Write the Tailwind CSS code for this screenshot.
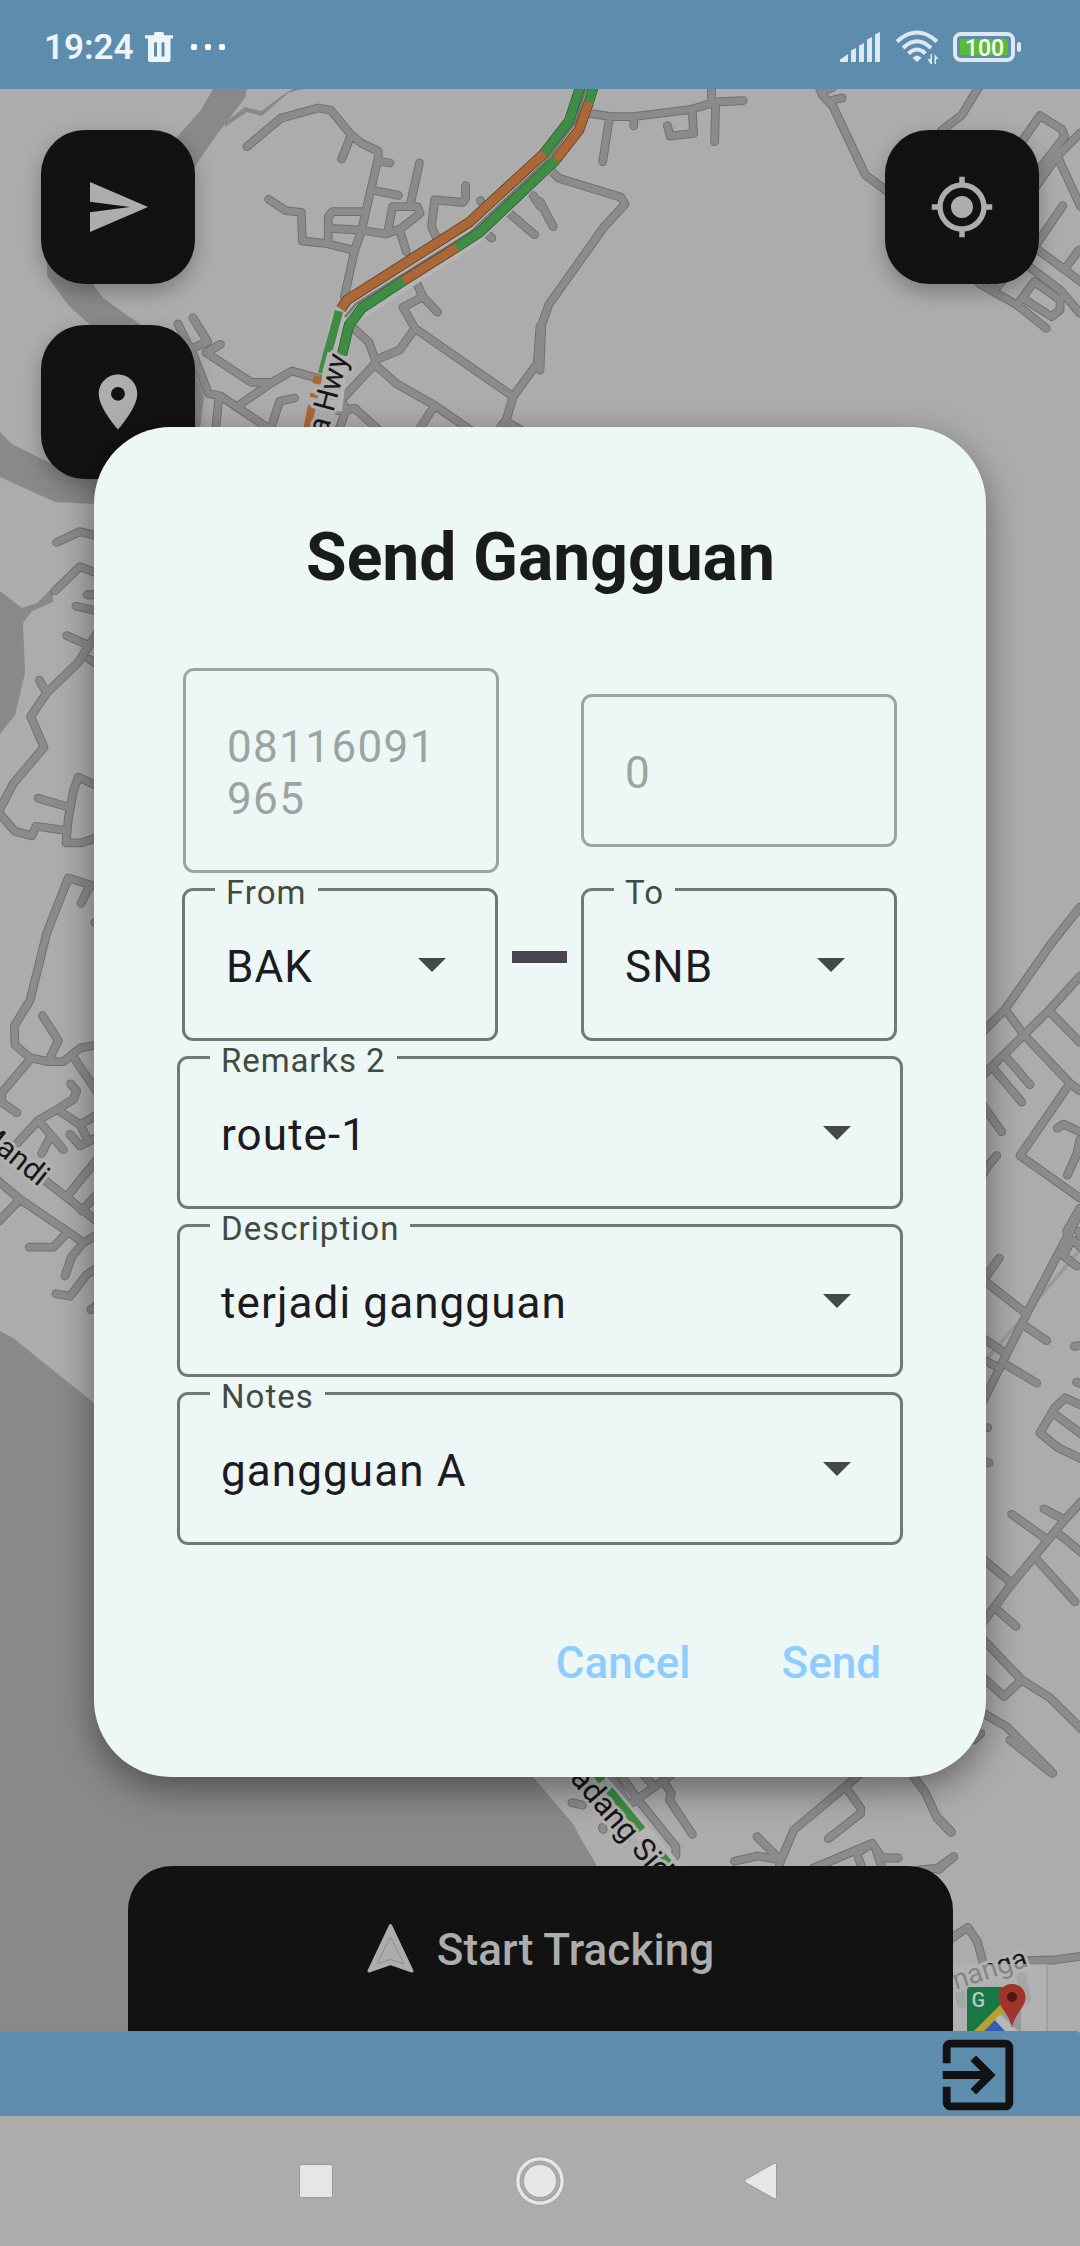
<!DOCTYPE html>
<html lang="id">
<head>
<meta charset="utf-8">
<title>Send Gangguan</title>
<script src="https://cdn.jsdelivr.net/npm/@tailwindcss/browser@4"></script>
</head>
<body class="bg-[#acacac]">
<div class="relative flex h-[2246px] w-[1080px] flex-col overflow-hidden font-[Roboto,sans-serif]">

  <!-- Status bar -->
  <header class="flex h-[89px] shrink-0 items-center justify-between bg-[#5e8cac] pl-[44px] pr-[58px] pt-[5px] text-[#edf5fa]">
    <div class="flex items-center">
      <span class="mt-[2px] w-[101px] text-[35px] font-semibold leading-[40px]">19:24</span>
      <svg class="h-[30px] w-[28px]" viewBox="0 0 28 30"><path fill="#edf5fa" d="M0 3.3H9V1.5Q9 0 10.5 0H17.5Q19 0 19 1.5V3.3H28V6.6H0Z"/><path fill="#edf5fa" fill-rule="evenodd" d="M3 6H25.5V28Q25.5 30 23.5 30H5Q3 30 3 28ZM9 11.5Q9 10 10.5 10T12 11.5V24.5H9ZM16.5 11.5Q16.5 10 18 10T19.5 11.5V24.5H16.5Z"/></svg>
      <span class="ml-[18px] flex gap-[8px]"><i class="size-[6px] rounded-[2px] bg-white"></i><i class="size-[6px] rounded-[2px] bg-white"></i><i class="size-[6px] rounded-[2px] bg-white"></i></span>
    </div>
    <div class="flex items-center">
      <svg class="h-[30px] w-[41px]" viewBox="0 0 41 30"><path fill="#dde8f1" d="M0 30V27.5L8 22V30ZM11 18.5L16 16V30H11ZM19 13.5L24 11V30H19ZM27 7.5L32 5V30H27ZM35 2.5L40 0V30H35Z"/></svg>
      <svg class="ml-[15px] h-[34px] w-[43px]" viewBox="0 0 43 34"><g fill="none" stroke="#dde8f1" stroke-width="4"><path d="M1 11.5Q21 -6.500 41 11.500"/><path d="M7 18Q21 4.500 35 18"/><path d="M12.500 23.500Q21 15.500 29.500 23.500"/></g><path fill="#dde8f1" d="M16.500 28Q21 23 25.500 28L21 32ZM34.500 24H36V34H34.500L31.500 29H34.500ZM38.500 24L42.500 29H40V34H38.500Z"/></svg>
      <svg class="ml-[14px] h-[30px] w-[69px]" viewBox="0 0 69 30"><rect x="2" y="2" width="58" height="26" rx="6" fill="none" stroke="#dde8f1" stroke-width="4"/><rect x="7" y="7" width="48" height="16" rx="2" fill="#5abd32"/><rect x="64" y="10" width="4" height="10" rx="2" fill="#dde8f1"/><text x="31.500" y="23.500" text-anchor="middle" font-size="23" font-weight="500" fill="#fff">100</text></svg>
    </div>
  </header>

  <!-- Map -->
  <main class="relative h-[1942px] shrink-0 overflow-hidden bg-[#acacac]">
    <svg class="absolute inset-0 h-[1942px] w-[1080px] [&_path]:[vector-effect:non-scaling-stroke]" viewBox="0 89 1080 1942">
      <g fill="#898989">
        <path d="M213 89L201 110 177 137 120 180 75 220 47 250V276L69 306 90 325 130 355 165 390 160 430 110 470 50 463 12 444 0 432V477L55 502 94 504 150 500 200 428 204 397 195 372 141 325 103 298 92 283 150 230 195 166 218 133 245 98 247 89Z"/>
        <path d="M225 122L245 107 261 111 286 93 293 89H302L288 93 262 116 247 112 225 127Z"/>
        <path d="M0 591L22 608 37 603 53 587V602L32 611 23 623 25 673 15 715 0 734Z"/>
        <path d="M0 1331L13 1338 94 1403 300 1500 533 1777 574 1825 580 1837 597 1866 620 2031H0Z"/>
      </g>
      <defs>
        <g id="roads">
          <g transform="scale(.34439 .33333)">
            <path d="M717 440L815 355 923 324 960 330 1020 405 992 477M1020 405L1050 430 1098 454V475L1072 590 1050 690 1030 750 1000 890M1098 483L1132 489M1080 570L1157 586M780 598L830 632 875 637 878 723 945 730 1025 750M1050 635H965L953 650V725M955 685L1045 690 1120 702 1165 685 1220 640 1212 620H1140L1125 700M1218 489L1192 610M1160 690L1180 755M1352 557V595L1345 607 1262 600 1253 680 1268 715M1395 602L1397 605M1415 702L1428 714M1480 640L1552 704M1548 587L1568 618M1208 845L1228 890 1270 936M1228 890L1170 922 1205 985 1160 1050 1090 1080 1070 1025 1030 988M1205 985L1490 1190 1470 1260 1440 1300M1490 1190L1560 1090 1568 980M1470 1265L1530 1300M1090 1090L1000 1190 990 1205 1010 1230M1090 1095L1150 1150 1260 1215 1380 1300M1260 1220L1210 1300M980 1232L1030 1225 1110 1300M1005 1230L980 1300M517 972L552 1048 603 1025 560 953M552 1040L605 1180 640 1188 780 1285M636 1190L625 1300M640 1033L598 1058 730 1147H790L848 1113 930 1137M790 1147L695 1215M855 1194L812 1204 785 1290"/>
          </g>
          <g transform="translate(540 0) scale(.34439 .33333)">
            <path d="M145 340L205 350H272L440 328 510 306 590 302M498 260V306M202 350L182 485M272 350V377M442 330L446 400 378 408 370 377M510 306L507 425M35 515L55 535 235 592 247 612 185 682 25 915 5 975 0 1110M0 605L38 680M810 260L820 285 850 318 945 525 1010 575M850 300L877 294M825 272L850 262M1275 260L1225 345 1165 392M1395 430L1452 347 1515 388 1523 410 1440 520M1570 398L1500 470 1440 560M1505 475L1570 620M1518 617L1440 735M1440 745L1525 810 1570 845M1525 805L1565 750M1420 800L1510 870 1568 940M1275 850L1385 915 1470 985M1320 870L1345 840M1385 915L1435 845 1510 900V930L1485 950 1410 900"/>
          </g>
          <g transform="translate(0 420) scale(.33333 .63776)">
            <path d="M170 192L240 175 290 182M165 268L240 230 290 240M262 274H290M228 292L290 299M200 338L265 353M290 335L235 380 140 428 92 465 132 513 40 570 -5 615 45 645 95 652 108 637 190 643M118 408L140 428M268 375L290 382M115 593L205 607M290 573L235 560 220 582 205 625 198 663H245L290 655M290 732L205 718 140 805 90 910 43 950 45 980 90 1000 145 1006H190L240 985 290 980M265 735L243 758M290 790L285 788M127 934L175 973 150 1000M215 995L290 1052M90 1003L5 1055V1070L50 1086M50 1135L115 1098 175 1080 220 1065 230 1052 212 1041M175 1082L240 1105 290 1090M240 1105L265 1130M290 1125L240 1138 210 1120M115 1098L190 1144M150 1125L125 1150M290 1160L205 1215M130 1190L290 1256M290 1215L245 1240M-5 1193L60 1222 210 1275 250 1290 290 1278M60 1222L-5 1257M200 1275L160 1297H88M250 1290L215 1312 195 1342M168 1370L210 1374 260 1340 290 1330M272 1395L290 1388"/>
          </g>
          <g transform="translate(980 420) scale(.33333 .5102)">
            <path d="M300 955L215 1025 75 1155 0 1205M75 1155L132 1205 270 1300 300 1315M300 1090L210 1155 132 1205 0 1290M210 1160L300 1220M80 1250L150 1303M45 1275L125 1337M0 1335L65 1395M0 1490L20 1465 50 1442M270 1300L120 1442 300 1525M300 1395L250 1380 232 1388M300 1410L290 1440 262 1480M300 1545L260 1590"/>
          </g>
          <g transform="translate(940 1200) scale(.33333 .44643)">
            <path d="M425 20L260 255 200 345 130 450M395 90L370 125 410 148M400 90L425 108M415 70L425 85M130 180L178 130M140 185L260 255M260 285L320 315M200 345L130 310M175 375L130 358M200 370L290 410M130 510H143M130 585L147 589M425 325L403 328M410 408L425 412M425 460L375 443 345 465 300 522 355 555 425 580M345 480L425 525M425 675L370 720 210 865 130 945M215 704L320 760M312 692L370 715M360 750L425 790M290 805L405 900M130 805L210 855M175 920L228 955M130 985L245 1075 330 1115 425 1185M245 1075L192 1112 130 1070M130 1150L200 1180 338 1284M100 1210L122 1195M-5 1385L35 1416M-5 1500L40 1472"/>
          </g>
          <g transform="translate(480 1740) scale(.38265 .33333)">
            <path d="M240 188L268 195M320 262L322 268M365 100L410 175 512 320V345L500 365M340 100L385 190M395 190L500 105M425 100L455 140M480 125L500 160 495 180 555 283M990 105L955 140 820 270 785 365 780 390M955 140L995 205V220L910 296M724 290L785 360 725 348 665 364M870 385L1025 310 1050 354H1093M1025 310L985 340 1000 390M1035 330L1052 390M1130 105L1165 160 1195 235 1230 277M1150 390L1195 385 1238 350M1385 0L1495 100M1225 600L1275 562 1300 605 1315 670M1430 662L1500 660 1575 648M1250 740L1258 790M1415 710L1428 778"/>
          </g>
        </g>
      </defs>
      <path d="M986 1360L1080 1250" stroke="#9a9a9a" stroke-width="3.500"/>
      <g fill="none" stroke-linecap="round" stroke-linejoin="round">
        <use href="#roads" stroke="#707070" stroke-width="8.800"/>
        <use href="#roads" stroke="#8b8b8b" stroke-width="6.900"/>
      </g>
      <g fill="none">
        <path d="M330 410L341 322 350 313 470 235 542 165 573 125 588 89" stroke="#b5b5b5" stroke-width="24"/>
        <path d="M345 317L356 304 471 232 547 160 575 123 587 85" stroke="#777" stroke-width="2.500"/>
        <g stroke="#5b4128" stroke-width="10.500">
          <path d="M341 309L347 300 469 222.500 545 152.500"/>
          <path d="M403 281L457 247M555.500 160L579 130 589 102"/>
        </g>
        <g stroke="#2f6634" stroke-width="10.500">
          <path d="M544 153L569 121 581 85M342 355L349 325 362 308 403 281M457 247L480 232 556 160M589 102L594 85"/>
        </g>
        <g stroke="#ac6736" stroke-width="8.800">
          <path d="M341 309L347 300 469 222.500 545 152.500"/>
          <path d="M403 281L457 247M555.500 160L579 130 589 102"/>
        </g>
        <g stroke="#3f8c45" stroke-width="8.800">
          <path d="M544 153L569 121 581 85M342 355L349 325 362 308 403 281M457 247L480 232 556 160M589 102L594 85"/>
        </g>
        <path d="M339 311L328 352" stroke="#3f8c45" stroke-width="8.500"/>
        <path d="M326 350L320 373" stroke="#3f8c45" stroke-width="4"/>
        <path d="M318 376L307 430" stroke="#ac6736" stroke-width="8" stroke-dasharray="8 10 4 8 40"/>
        <path d="M331 395L322 425" stroke="#3f8c45" stroke-width="8" stroke-dasharray="4 9"/>
        <path d="M586 1765L676 1872" stroke="#b5b5b5" stroke-width="17"/>
        <path d="M594 1770L602 1781M609 1790L642 1830M657 1850L674 1870" stroke="#3f8c45" stroke-width="8.500"/>
        <path d="M627 1840L632 1833" stroke="#ac6736" stroke-width="6"/>
      </g>
      <g font-size="30" fill="#161616" stroke="#b1b1b1" stroke-width="6" stroke-linejoin="round" paint-order="stroke">
        <text transform="translate(327 436) rotate(-75)">a Hwy</text>
        <text transform="translate(39 1187) rotate(39)" text-anchor="end">Mandi</text>
        <text transform="translate(569 1779) rotate(49)" font-size="31">adang Sidempuan</text>
        <text transform="translate(1029 1966) rotate(-18)" font-size="28" text-anchor="end">enanga</text>
      </g>
      <!-- Google Maps shortcut -->
      <path fill="#b4b4b4" fill-opacity=".7" d="M940 1964H1046V2031H940Z"/>
      <path d="M1047 1964V2031" stroke="#a0a0a0" stroke-width="2"/>
      <path fill="#999" d="M1000 1987H1021V2031H990Z"/>
      <path fill="#187845" d="M967 1990Q967 1987 970 1987H1004L1003 2004 975 2031H967Z"/>
      <path fill="#b9a02e" d="M1001 2004L974 2031H985L1007 2010Z"/>
      <path fill="#345fb0" d="M995 2020L1005 2031H984Z"/>
      <path fill="#b8b8b8" d="M995 2020L1000 2014 1018 2031H1005Z"/>
      <path fill="#a0342a" d="M1012 1984C1004 1984 998.500 1990 998.500 1997.500 998.500 2008 1010 2014 1012 2028 1014 2014 1025.500 2008 1025.500 1997.500 1025.500 1990 1020 1984 1012 1984Z"/>
      <circle cx="1012" cy="1997" r="5" fill="#521510"/>
      <text x="971.500" y="2007" font-size="20" font-weight="500" fill="#b8c8be">G</text>
    </svg>

    <button class="absolute left-[41px] top-[41px] flex size-[154px] items-center justify-center rounded-[44px] bg-[#121212] pl-[2px] shadow-[0_8px_20px_rgba(0,0,0,0.28)]">
      <svg class="h-[50px] w-[58px]" viewBox="0 0 58 50"><path fill="#adadad" d="M0 0L58 25 0 50V30.300L40 25 0 19.700Z"/></svg>
    </button>
    <button class="absolute left-[41px] top-[236px] flex size-[154px] items-center justify-center rounded-[44px] bg-[#121212] shadow-[0_8px_20px_rgba(0,0,0,0.28)]">
      <svg class="size-[66px]" viewBox="0 0 24 24"><path fill="#adadad" d="M12 2C8.130 2 5 5.130 5 9c0 5.250 7 13 7 13s7-7.750 7-13c0-3.870-3.130-7-7-7zm0 9.500c-1.380 0-2.500-1.120-2.500-2.500s1.120-2.500 2.500-2.500 2.500 1.120 2.500 2.500-1.120 2.500-2.500 2.500z"/></svg>
    </button>
    <button class="absolute left-[885px] top-[41px] flex size-[154px] items-center justify-center rounded-[44px] bg-[#121212] shadow-[0_8px_20px_rgba(0,0,0,0.28)]">
      <svg class="size-[66px]" viewBox="0 0 24 24"><path fill="#adadad" d="M12 8c-2.210 0-4 1.790-4 4s1.790 4 4 4 4-1.790 4-4-1.790-4-4-4zm8.940 3c-.46-4.170-3.770-7.480-7.940-7.940V1h-2v2.060C6.830 3.520 3.520 6.830 3.060 11H1v2h2.060c.46 4.170 3.770 7.480 7.940 7.940V23h2v-2.060c4.170-.46 7.480-3.770 7.940-7.940H23v-2h-2.060zM12 19c-3.870 0-7-3.130-7-7s3.130-7 7-7 7 3.130 7 7-3.130 7-7 7z"/></svg>
    </button>

    <button class="absolute bottom-0 left-[128px] flex h-[165px] w-[825px] items-center justify-center gap-[23px] rounded-t-[44px] bg-[#121212] text-[#adadad]">
      <svg class="-mt-[1px] h-[50px] w-[47px]" viewBox="0 0 47 50"><path fill="#adadad" stroke="#adadad" stroke-width="3" stroke-linejoin="round" d="M23.500 2.500L45 48 23.500 40.500 2 48Z"/><path fill="none" stroke="#858585" stroke-width=".8" d="M23.500 14L37 41 23.500 36.500 10 41Z"/></svg>
      <span class="mt-[3px] text-[44px] font-medium leading-[52px] tracking-[0.070px]">Start Tracking</span>
    </button>
  </main>

  <!-- Toolbar -->
  <footer class="flex h-[85px] shrink-0 justify-end rounded-tr-[4px] bg-[#5e8cac] pr-[55px]">
    <svg class="-mt-[3px] size-[94px]" viewBox="0 0 24 24"><path fill="#121212" d="M10.090 15.590L11.500 17l5-5-5-5-1.410 1.410L12.670 11H3v2h9.670l-2.580 2.590zM19 3H5c-1.110 0-2 .9-2 2v4h2V5h14v14H5v-4H3v4c0 1.100.89 2 2 2h14c1.100 0 2-.9 2-2V5c0-1.100-.9-2-2-2z"/></svg>
  </footer>

  <!-- System navigation -->
  <nav class="flex h-[130px] shrink-0 items-center bg-[#acacac] pl-[299px]">
    <svg class="size-[34px]" viewBox="0 0 34 34"><rect x=".5" y=".5" width="33" height="33" rx="2" fill="#e6e6e6" stroke="#989898"/></svg>
    <svg class="ml-[182px] size-[50px]" viewBox="0 0 50 50"><circle cx="25" cy="25" r="24.300" fill="#e6e6e6" stroke="#989898" stroke-width=".8"/><circle cx="25" cy="25" r="20" fill="#acacac" stroke="#989898" stroke-width=".8"/><circle cx="25" cy="25" r="16.500" fill="#e6e6e6" stroke="#989898" stroke-width=".8"/></svg>
    <svg class="ml-[179px] h-[38px] w-[34px]" viewBox="0 0 34 38"><path fill="#e6e6e6" stroke="#989898" d="M1.500 20.500Q0 19 1.500 17.500L30 1.300Q32.500 .3 32.500 2.500V35.500Q32.500 37.700 30 36.700Z"/></svg>
  </nav>

  <!-- Dialog -->
  <section class="absolute left-[94px] top-[427px] flex h-[1350px] w-[892px] flex-col rounded-[77px] bg-[#edf8f6] px-[83px] pt-[92px] shadow-[0_12px_36px_rgba(0,0,0,0.42)]">
    <h1 class="pl-[1px] text-center text-[66px] font-bold leading-[78px] text-[#191c19]">Send Gangguan</h1>

    <div class="mt-[71px] flex items-center justify-between px-[6px] text-[44px] leading-[52px] tracking-[1.375px] text-[#9ca4a2]">
      <div class="h-[205px] w-[316px] break-all rounded-[11px] border-3 border-[#9ca4a2] px-[41px] pt-[50px]">08116091965</div>
      <div class="h-[153px] w-[316px] rounded-[11px] border-3 border-[#9ca4a2] px-[41px] pt-[50px]">0</div>
    </div>

    <div class="mt-[15px] flex items-center pl-[5px] text-[44px] leading-[52px] tracking-[1.100px] text-[#1d1b20]">
      <div class="relative flex h-[153px] w-[316px] justify-between rounded-[11px] border-3 border-[#727971] pl-[41px] pr-[49px] pt-[50px]">
        <span class="absolute -top-[18px] left-[30px] bg-[#edf8f6] px-[11px] text-[33px] leading-[39px] tracking-[1.030px] text-[#434a42]">From</span>
        <span>BAK</span>
        <svg class="mt-[17px] h-[14px] w-[28px]" viewBox="0 0 28 14"><path fill="#434a42" d="M0 0H28L14 14Z"/></svg>
      </div>
      <div class="ml-[14px] mr-[14px] mt-[-15px] h-[12px] w-[55px] bg-[#48454e]"></div>
      <div class="relative flex h-[153px] w-[316px] justify-between rounded-[11px] border-3 border-[#727971] pl-[41px] pr-[49px] pt-[50px]">
        <span class="absolute -top-[18px] left-[30px] bg-[#edf8f6] px-[11px] text-[33px] leading-[39px] tracking-[1.030px] text-[#434a42]">To</span>
        <span>SNB</span>
        <svg class="mt-[17px] h-[14px] w-[28px]" viewBox="0 0 28 14"><path fill="#434a42" d="M0 0H28L14 14Z"/></svg>
      </div>
    </div>

    <div class="mt-[15px] flex flex-col gap-[15px] text-[44px] leading-[52px] tracking-[1.100px] text-[#1d1b20]">
      <div class="relative flex h-[153px] justify-between rounded-[11px] border-3 border-[#727971] pl-[41px] pr-[49px] pt-[50px]">
        <span class="absolute -top-[18px] left-[30px] bg-[#edf8f6] px-[11px] text-[33px] leading-[39px] tracking-[0.900px] text-[#434a42]">Remarks 2</span>
        <span>route-1</span>
        <svg class="mt-[17px] h-[14px] w-[28px]" viewBox="0 0 28 14"><path fill="#434a42" d="M0 0H28L14 14Z"/></svg>
      </div>
      <div class="relative flex h-[153px] justify-between rounded-[11px] border-3 border-[#727971] pl-[41px] pr-[49px] pt-[50px]">
        <span class="absolute -top-[18px] left-[30px] bg-[#edf8f6] px-[11px] text-[33px] leading-[39px] tracking-[1.030px] text-[#434a42]">Description</span>
        <span>terjadi gangguan</span>
        <svg class="mt-[17px] h-[14px] w-[28px]" viewBox="0 0 28 14"><path fill="#434a42" d="M0 0H28L14 14Z"/></svg>
      </div>
      <div class="relative flex h-[153px] justify-between rounded-[11px] border-3 border-[#727971] pl-[41px] pr-[49px] pt-[50px]">
        <span class="absolute -top-[18px] left-[30px] bg-[#edf8f6] px-[11px] text-[33px] leading-[39px] tracking-[1.030px] text-[#434a42]">Notes</span>
        <span>gangguan A</span>
        <svg class="mt-[17px] h-[14px] w-[28px]" viewBox="0 0 28 14"><path fill="#434a42" d="M0 0H28L14 14Z"/></svg>
      </div>
    </div>

    <div class="mt-[92px] flex justify-end gap-[91px] pr-[22px] text-[44px] font-medium leading-[52px] text-[#8ecdfe]">
      <button>Cancel</button>
      <button>Send</button>
    </div>
  </section>
</div>
</body>
</html>
